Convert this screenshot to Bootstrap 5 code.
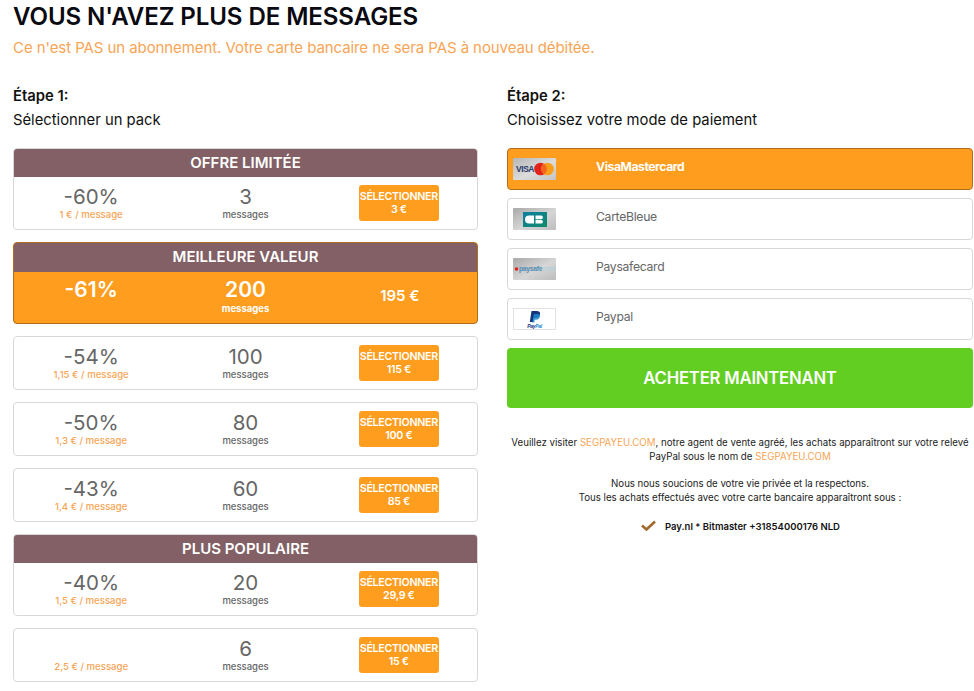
<!DOCTYPE html>
<html lang="fr">
<head>
<meta charset="utf-8">
<title>Vous n'avez plus de messages</title>
<link href="https://cdn.jsdelivr.net/npm/bootstrap@5.3.0/dist/css/bootstrap.min.css" rel="stylesheet">
<style>
html,body{height:691px;overflow:hidden}
body{font-family:"Inter","Liberation Sans",sans-serif;color:#111;background:#fff;font-size:15px}
.shell{padding:0 1px 0 13px;width:974px}
.ttl{font-size:24.1px;font-weight:600;line-height:28px;margin:3px 0 7px;color:#0a0a12;letter-spacing:-.1px}
.sub{font-size:15px;line-height:20px;color:#f8a556;margin-bottom:26px;letter-spacing:-.08px}
.cols{display:grid;grid-template-columns:465px 466px;column-gap:29px}
.step{line-height:24px;font-size:14.8px;margin-bottom:16px;height:48px}
.step b{font-weight:600;display:block}
.pk{border:1px solid #d8d8d8;border-radius:4px;margin-bottom:12px;overflow:hidden;background:#fff}
.pk-head{background:#826065;color:#fff;font-weight:600;font-size:15px;text-align:center;height:28px;line-height:27px}
.pk-row{height:52px;color:#666;text-align:center;align-items:center}
.pk-sel{border-color:#b06d1a;background:#ff9d1e}
.pk-sel .pk-head{height:29px}
.pk-sel .pk-row{height:51px;color:#fff;font-weight:600;align-items:flex-start}
.pct{font-size:20.5px;line-height:24px;font-weight:400;height:24px;margin-top:-1px}
.per{font-size:9.6px;line-height:12px;color:#f8a556;font-weight:500;height:12px}
.msg{font-size:9.5px;line-height:12px;color:#666;font-weight:500}
.pk-sel .pct{font-size:21px;font-weight:600;margin-top:6px}
.pk-sel .msg{color:#fff;font-weight:700;margin-top:1px}
.pk-sel .amt{font-size:15px;line-height:22px;font-weight:600;margin-top:13px}
.sel{background:#ff9d1e;color:#fff;width:80px;height:36px;border-radius:3px;margin:0 auto;font-size:10.7px;font-weight:600;line-height:13px;padding:4.5px 0 0;white-space:nowrap;letter-spacing:-.3px;overflow:hidden;position:relative;left:-1px}
.pay{height:42px;border:1px solid #d8d8d8;border-radius:4px;margin-bottom:8px;padding-left:5px;align-items:center;color:#666;font-size:12.2px;letter-spacing:-.3px}
.pay span{margin-top:-4px}
.pay svg{width:43px;height:22px;margin-right:40px;flex:none;display:block}
.pay-on{background:#ff9d1e;border-color:#b06d1a;color:#fff;font-weight:700;letter-spacing:-.45px}
.buy{background:#62ce22;color:#fff;height:60px;border-radius:4px;border:0;font-size:16.7px;font-weight:600;width:100%;margin-bottom:28px;letter-spacing:-.2px;padding-bottom:4px}
.buy:hover{background:#62ce22;color:#fff}
.note{text-align:center;font-size:9.7px;line-height:14px;color:#222;margin-bottom:13px}
.note-tight{letter-spacing:-.03px}
.note a{color:#f8a556;text-decoration:none}
.okline{font-weight:600;color:#111;display:flex;justify-content:center;align-items:center;gap:9px;margin-top:15px;font-size:9.5px;margin-left:1px}
.okline svg{width:15px;height:11px;display:block;margin-top:-3px}
</style>
</head>
<body>
<div class="shell">
  <h1 class="ttl">VOUS N'AVEZ PLUS DE MESSAGES</h1>
  <p class="sub">Ce n'est PAS un abonnement. Votre carte bancaire ne sera PAS à nouveau débitée.</p>
  <div class="cols">
    <div>
      <div class="step"><b>Étape 1:</b>Sélectionner un pack</div>

      <div class="pk">
        <div class="pk-head">OFFRE LIMITÉE</div>
        <div class="row g-0 pk-row">
          <div class="col-4"><div class="pct">-60%</div><div class="per">1 € / message</div></div>
          <div class="col-4"><div class="pct">3</div><div class="msg">messages</div></div>
          <div class="col-4"><div class="sel">SÉLECTIONNER<br>3 €</div></div>
        </div>
      </div>

      <div class="pk pk-sel">
        <div class="pk-head">MEILLEURE VALEUR</div>
        <div class="row g-0 pk-row">
          <div class="col-4"><div class="pct">-61%</div></div>
          <div class="col-4"><div class="pct">200</div><div class="msg">messages</div></div>
          <div class="col-4"><div class="amt">195 €</div></div>
        </div>
      </div>

      <div class="pk">
        <div class="row g-0 pk-row">
          <div class="col-4"><div class="pct">-54%</div><div class="per">1,15 € / message</div></div>
          <div class="col-4"><div class="pct">100</div><div class="msg">messages</div></div>
          <div class="col-4"><div class="sel">SÉLECTIONNER<br>115 €</div></div>
        </div>
      </div>

      <div class="pk">
        <div class="row g-0 pk-row">
          <div class="col-4"><div class="pct">-50%</div><div class="per">1,3 € / message</div></div>
          <div class="col-4"><div class="pct">80</div><div class="msg">messages</div></div>
          <div class="col-4"><div class="sel">SÉLECTIONNER<br>100 €</div></div>
        </div>
      </div>

      <div class="pk">
        <div class="row g-0 pk-row">
          <div class="col-4"><div class="pct">-43%</div><div class="per">1,4 € / message</div></div>
          <div class="col-4"><div class="pct">60</div><div class="msg">messages</div></div>
          <div class="col-4"><div class="sel">SÉLECTIONNER<br>85 €</div></div>
        </div>
      </div>

      <div class="pk">
        <div class="pk-head">PLUS POPULAIRE</div>
        <div class="row g-0 pk-row">
          <div class="col-4"><div class="pct">-40%</div><div class="per">1,5 € / message</div></div>
          <div class="col-4"><div class="pct">20</div><div class="msg">messages</div></div>
          <div class="col-4"><div class="sel">SÉLECTIONNER<br>29,9 €</div></div>
        </div>
      </div>

      <div class="pk">
        <div class="row g-0 pk-row">
          <div class="col-4"><div class="pct"></div><div class="per">2,5 € / message</div></div>
          <div class="col-4"><div class="pct">6</div><div class="msg">messages</div></div>
          <div class="col-4"><div class="sel">SÉLECTIONNER<br>15 €</div></div>
        </div>
      </div>
    </div>

    <div>
      <div class="step"><b>Étape 2:</b>Choisissez votre mode de paiement</div>

      <div class="d-flex pay pay-on">
        <svg viewBox="0 0 43 22"><defs><linearGradient id="g1" x1="0" y1="0" x2="1" y2="1"><stop offset="0" stop-color="#b5b5b5"/><stop offset=".55" stop-color="#dcdcdc"/><stop offset="1" stop-color="#c4c4c4"/></linearGradient></defs><rect width="43" height="22" rx="1" fill="url(#g1)"/><text x="3" y="14" font-family="Liberation Sans,sans-serif" font-size="8.500" font-weight="700" fill="#2a3a6c">VISA</text><circle cx="27.500" cy="11" r="6.300" fill="#e2231a"/><circle cx="34.500" cy="11" r="6.300" fill="#f79e1b"/><path d="M31 5.800a6.300 6.300 0 0 1 0 10.400a6.300 6.300 0 0 1 0-10.400z" fill="#f2641e"/></svg>
        <span>VisaMastercard</span>
      </div>
      <div class="d-flex pay">
        <svg viewBox="0 0 43 22"><defs><linearGradient id="g2" x1="0" y1="0" x2="1" y2="1"><stop offset="0" stop-color="#a9a9a9"/><stop offset=".55" stop-color="#d6d6d6"/><stop offset="1" stop-color="#bdbdbd"/></linearGradient><linearGradient id="g3" x1="0" y1="0" x2="1" y2="1"><stop offset="0" stop-color="#0d7fa0"/><stop offset="1" stop-color="#0f8a6a"/></linearGradient></defs><rect width="43" height="22" rx="1" fill="url(#g2)"/><rect x="10" y="4" width="24" height="15" fill="url(#g3)"/><path d="M21 7.500h-5a4 4 0 0 0 0 8h5z" fill="#fff"/><path d="M22.500 7.500h6a1.900 1.900 0 0 1 0 3.700h-6zM22.500 12h6a1.800 1.800 0 0 1 0 3.500h-6z" fill="#fff"/></svg>
        <span>CarteBleue</span>
      </div>
      <div class="d-flex pay">
        <svg viewBox="0 0 43 22"><rect width="43" height="22" rx="1" fill="url(#g2)"/><circle cx="3.500" cy="11" r="1.800" fill="#e2231a"/><text x="6" y="13" font-family="Liberation Sans,sans-serif" font-size="6.800" font-weight="700" fill="#4f8db5">paysafe<tspan fill="#b9d0dc">card</tspan></text></svg>
        <span>Paysafecard</span>
      </div>
      <div class="d-flex pay">
        <svg viewBox="0 0 43 22"><rect x=".5" y=".5" width="42" height="21" fill="#fff" stroke="#e2e2e2"/><path d="M18.500 3h5c3 0 4 1.500 3.500 3.500c-.5 2.500-2.400 3.500-4.600 3.500h-1.600l-.8 4h-3.200z" fill="#13367f"/><path d="M21 6h3.500c1.800 0 2.800 1 2.400 2.800c-.4 2-2 2.900-3.800 2.900h-1.300l-.6 2.800h-2z" fill="#1d88cf" opacity=".85"/><text x="21.500" y="20" text-anchor="middle" font-family="Liberation Sans,sans-serif" font-size="5" font-weight="700" font-style="italic" fill="#13367f">Pay<tspan fill="#1d88cf">Pal</tspan></text></svg>
        <span>Paypal</span>
      </div>

      <button type="button" class="btn buy">ACHETER MAINTENANT</button>

      <p class="note"><span class="d-block">Veuillez visiter <a href="#">SEGPAYEU.COM</a>, notre agent de vente agréé, les achats apparaîtront sur votre relevé</span><span class="d-block">PayPal sous le nom de <a href="#">SEGPAYEU.COM</a></span></p>
      <p class="note note-tight">Nous nous soucions de votre vie privée et la respectons.<br>Tous les achats effectués avec votre carte bancaire apparaîtront sous :</p>
      <div class="note okline"><svg viewBox="0 0 15 11"><path d="M1 5.500l4.500 4L14 1.500" fill="none" stroke="#a06a2c" stroke-width="2.600"/></svg><span>Pay.nl * Bitmaster +31854000176 NLD</span></div>
    </div>
  </div>
</div>
<script src="https://cdn.jsdelivr.net/npm/bootstrap@5.3.0/dist/js/bootstrap.bundle.min.js"></script>
</body>
</html>
